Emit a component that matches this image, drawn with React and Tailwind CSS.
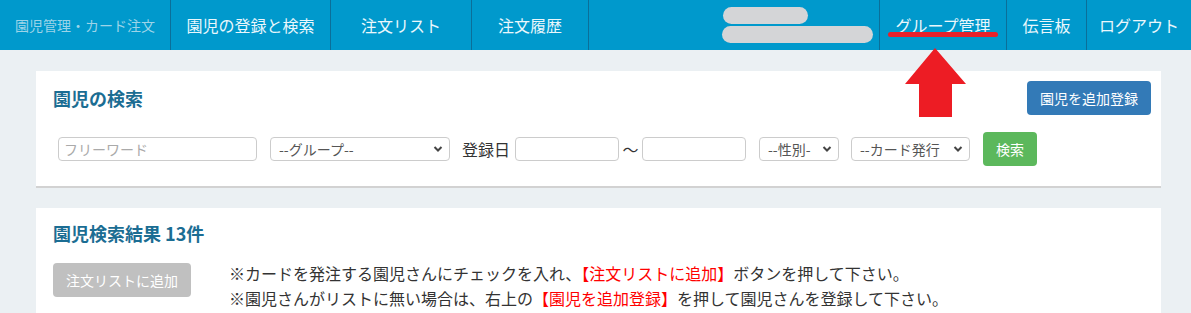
const font = { fontFamily: '"Noto Sans CJK JP", "Noto Sans", sans-serif' };

function Chevron() {
  return (
    <svg width="10" height="8" viewBox="0 0 10 8" className="shrink-0">
      <path d="M1.5 2 L5 5.5 L8.5 2" fill="none" stroke="#444" strokeWidth="2" />
    </svg>
  );
}

function FakeSelect({ label, width }) {
  return (
    <div className={`${width} h-[24px] flex items-center justify-between border border-[#ccc] rounded-[4px] bg-white pl-[8px] pr-[6px] overflow-hidden`}>
      <span className="text-[14px] text-[#555] whitespace-nowrap overflow-hidden leading-[20px]">{label}</span>
      <Chevron />
    </div>
  );
}

export default function App() {
  return (
    <div className="w-[1191px] h-[313px] bg-[#ebf0f3] overflow-hidden relative" style={font}>
      {/* navbar */}
      <div className="h-[50px] bg-[#0099cc] flex text-[16px] text-[#eaf7fc]">
        <div className="w-[170px] flex items-center pl-[15px] text-[14px] text-[#9dd4e8]">園児管理・カード注文</div>
        <div className="w-[160px] flex items-center justify-center border-l border-[#0b6f99]">園児の登録と検索</div>
        <div className="w-[141px] flex items-center justify-center border-l border-[#0b6f99]">注文リスト</div>
        <div className="w-[118px] flex items-center justify-center border-x border-[#0b6f99]">注文履歴</div>
        <div className="flex-1 flex flex-col items-end justify-center gap-[2px] pr-[5px]">
          <div className="w-[152px] flex flex-col gap-[2px]">
            <div className="w-[85px] h-[17px] ml-[1px] rounded-full bg-[#d4d5d7]" />
            <div className="w-[151px] h-[17px] rounded-full bg-[#d4d5d7]" />
          </div>
        </div>
        <div className="w-[127px] flex items-center justify-center border-l border-[#0b6f99]">グループ管理</div>
        <div className="w-[80px] flex items-center justify-center border-l border-[#0b6f99]">伝言板</div>
        <div className="w-[105px] flex items-center justify-center border-l border-[#0b6f99]">ログアウト</div>
      </div>

      {/* annotation */}
      <div className="absolute left-[888px] top-[32px] w-[110px] h-[5px] rounded-full bg-[#e8202a]" />
      <svg className="absolute left-[904px] top-[47px]" width="64" height="71" viewBox="0 0 64 71">
        <path d="M31 1 L62 37 L48 37 L48 70 L15 70 L15 37 L1 37 Z" fill="#ed1c24" />
      </svg>

      {/* search card */}
      <div className="ml-[36px] mt-[21px] w-[1125px] bg-white shadow-[0_2px_0_#d2d2d2]">
        <div className="flex justify-between items-start pl-[17px] pr-[10px] pt-[10px]">
          <h2 className="mt-[5px] text-[18px] leading-[24px] font-bold text-[#1b6d93]">園児の検索</h2>
          <button className="w-[124px] h-[34px] rounded-[4px] bg-[#337ab7] text-white text-[14px]">園児を追加登録</button>
        </div>
        <div className="flex items-center pl-[22px] mt-[17px] pb-[20px] text-[16px] text-[#333]">
          <div className="w-[199px] h-[24px] border border-[#ccc] rounded-[4px] flex items-center pl-[5px] text-[14px] text-[#aaa]">フリーワード</div>
          <div className="ml-[13px]"><FakeSelect label="--グループ--" width="w-[180px]" /></div>
          <span className="ml-[12px]">登録日</span>
          <div className="ml-[5px] w-[104px] h-[24px] border border-[#ccc] rounded-[4px]" />
          <span className="w-[23px] text-center">〜</span>
          <div className="w-[104px] h-[24px] border border-[#ccc] rounded-[4px]" />
          <div className="ml-[13px]"><FakeSelect label="--性別-" width="w-[80px]" /></div>
          <div className="ml-[12px]"><FakeSelect label="--カード発行" width="w-[119px]" /></div>
          <button className="ml-[13px] w-[54px] h-[34px] rounded-[4px] bg-[#5cb85c] text-white text-[14px]">検索</button>
        </div>
      </div>

      {/* result card */}
      <div className="ml-[36px] mt-[22px] w-[1125px] h-[120px] bg-white pl-[17px] pt-[13px]">
        <h2 className="text-[18px] leading-[24px] font-bold text-[#1b6d93]">園児検索結果 13件</h2>
        <div className="flex items-start mt-[16px]">
          <button className="mt-[2px] w-[138px] h-[34px] rounded-[4px] bg-[#c0c0c0] text-white text-[14px]">注文リストに追加</button>
          <div className="ml-[38px] text-[16px] leading-[25px] text-[#333]">
            <p>※カードを発注する園児さんにチェックを入れ、<span className="text-[#ff0000]">【注文リストに追加】</span>ボタンを押して下さい。</p>
            <p>※園児さんがリストに無い場合は、右上の<span className="text-[#ff0000]">【園児を追加登録】</span>を押して園児さんを登録して下さい。</p>
          </div>
        </div>
      </div>
    </div>
  );
}
